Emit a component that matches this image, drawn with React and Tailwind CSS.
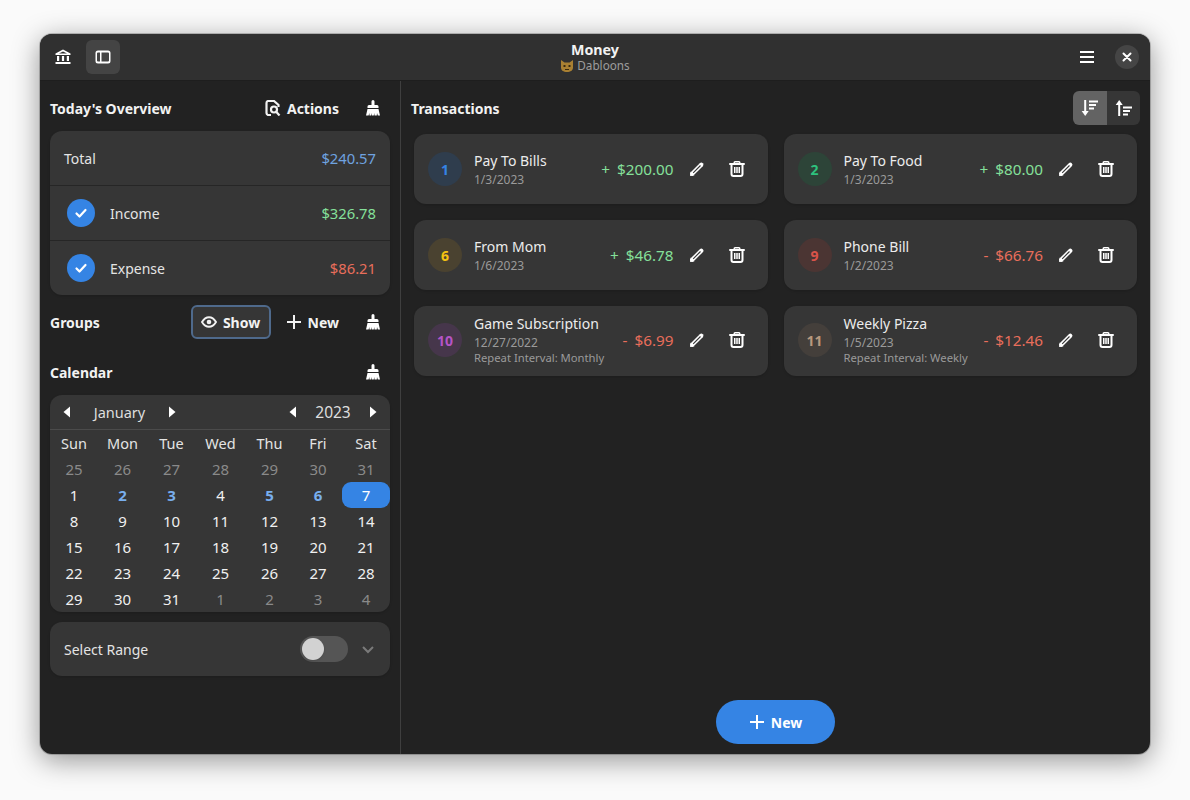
import React from 'react'

const Bank = () => (
  <svg width="16" height="16" viewBox="0 0 16 16" fill="currentColor">
    <path fillRule="evenodd" d="M8 0.500 15.500 4.500V6H.5V4.500ZM8 2.600 4 4.500h8Z" />
    <rect x="2" y="7" width="2.200" height="5" />
    <rect x="6.900" y="7" width="2.200" height="5" />
    <rect x="11.800" y="7" width="2.200" height="5" />
    <rect x="0.500" y="13" width="15" height="2" />
  </svg>
)

const SidebarIcon = () => (
  <svg width="16" height="16" viewBox="0 0 16 16" fill="currentColor">
    <path fillRule="evenodd" d="M3 1.500h10a2.500 2.500 0 0 1 2.500 2.500v8a2.500 2.500 0 0 1-2.500 2.500H3A2.500 2.500 0 0 1 .5 12V4A2.500 2.500 0 0 1 3 1.500Zm3.500 2v9H13a1 1 0 0 0 1-1V4.500a1 1 0 0 0-1-1ZM3 3.500a1 1 0 0 0-1 1v7a1 1 0 0 0 1 1h2v-9Z" />
  </svg>
)

const Menu = () => (
  <svg width="16" height="16" viewBox="0 0 16 16" fill="currentColor">
    <rect x="1" y="2" width="14" height="2" />
    <rect x="1" y="7" width="14" height="2" />
    <rect x="1" y="12" width="14" height="2" />
  </svg>
)

const Close = () => (
  <svg width="10" height="10" viewBox="0 0 10 10" stroke="currentColor" strokeWidth="2" strokeLinecap="round">
    <path d="M1.500 1.500 8.500 8.500M8.500 1.500 1.500 8.500" />
  </svg>
)

const Actions = () => (
  <svg width="16" height="16" viewBox="0 0 16 16" fill="none" stroke="currentColor" strokeWidth="2.200">
    <path d="M6 15H3A2 2 0 0 1 1.500 13V3A2 2 0 0 1 3 1h6l4.500 4v2" />
    <circle cx="9" cy="9.500" r="3" />
    <path d="M10.500 11 14.500 15.500" />
  </svg>
)

const Broom = () => (
  <svg width="16" height="16" viewBox="0 0 16 16" fill="currentColor">
    <path d="M6.500 1.500a1.500 1.500 0 0 1 3 0V5h2.500a1.500 1.500 0 0 1 1.500 1.500V8h-11V6.500A1.500 1.500 0 0 1 4 5h2.500Z" />
    <path d="M2.500 9h11l1.500 6.500h-2.200l-.8-2.500-.2 2.500H9.500l-.3-2.500-.4 2.500H7l-.2-2.500-.5 2.500H4.500l-.2-2.500-.7 2.500H1Z" />
  </svg>
)

const Eye = () => (
  <svg width="16" height="16" viewBox="0 0 16 16" fill="currentColor">
    <path d="M1 8C2.800 5 5 3.200 8 3.200S13.200 5 15 8c-1.800 3-4 4.800-7 4.800S2.800 11 1 8Z" fill="none" stroke="currentColor" strokeWidth="1.900" />
    <circle cx="8" cy="8" r="2.300" />
  </svg>
)

const Plus = () => (
  <svg width="16" height="16" viewBox="0 0 16 16" fill="currentColor">
    <rect x="7" y="1" width="2" height="14" />
    <rect x="1" y="7" width="14" height="2" />
  </svg>
)

const Pencil = () => (
  <svg width="16" height="16" viewBox="0 0 16 16" fill="none">
    <path d="M3.200 12.800 12.300 3.700" stroke="white" strokeWidth="4.200" strokeLinecap="round" />
    <path d="M1 15 1.800 10.500 5.500 14.200Z" fill="white" />
    <path d="M4.200 11.800 11.500 4.500" stroke="#363636" strokeWidth="1.100" />
  </svg>
)

const Trash = () => (
  <svg width="16" height="16" viewBox="0 0 16 16" fill="currentColor">
    <path fillRule="evenodd" d="M6 0h4a1.500 1.500 0 0 1 1.500 1.500V2H15a.9.9 0 0 1 0 2h-.500v9a3 3 0 0 1-3 3h-7a3 3 0 0 1-3-3V4H1a.9.9 0 0 1 0-2h3.500v-.5A1.500 1.500 0 0 1 6 0Zm0 1.500V2h4v-.5ZM3.500 4v9a1 1 0 0 0 1 1h7a1 1 0 0 0 1-1V4Z" />
    <rect x="5" y="6" width="1.500" height="6" />
    <rect x="7.250" y="6" width="1.500" height="6" />
    <rect x="9.500" y="6" width="1.500" height="6" />
  </svg>
)

const SortDown = () => (
  <svg width="18" height="18" viewBox="0 0 18 18" fill="currentColor">
    <rect x="3.200" y="1" width="2" height="12" />
    <path d="M0.700 12h7L4.200 17Z" />
    <rect x="8" y="1.500" width="9" height="2" />
    <rect x="8" y="5" width="7" height="2" />
    <rect x="8" y="8.500" width="5" height="2" />
  </svg>
)

const SortUp = () => (
  <svg width="18" height="18" viewBox="0 0 18 18" fill="currentColor">
    <rect x="3.200" y="5" width="2" height="12" />
    <path d="M0.700 6h7L4.200 1Z" />
    <rect x="8" y="7.500" width="9" height="2" />
    <rect x="8" y="11" width="7" height="2" />
    <rect x="8" y="14.500" width="5" height="2" />
  </svg>
)

const Check = () => (
  <svg width="14" height="14" viewBox="0 0 14 14" fill="none" stroke="white" strokeWidth="2.200" strokeLinecap="round" strokeLinejoin="round">
    <path d="M2.500 7.500 5.500 10.500 11.500 4" />
  </svg>
)

const Cat = () => (
  <svg width="14" height="14" viewBox="0 0 14 14">
    <path d="M1 1l3.500 2.500h5L13 1v7.500C13 11.500 10.500 13 7 13s-6-1.500-6-4.500Z" fill="#a98032" />
    <rect x="3.500" y="6" width="2" height="2" fill="#3a2a10" />
    <rect x="8.500" y="6" width="2" height="2" fill="#3a2a10" />
    <path d="M5 10h4v1H5Z" fill="#3a2a10" />
  </svg>
)

const TriLeft = () => (
  <svg width="8" height="12" viewBox="0 0 8 12" fill="currentColor"><path d="M7 0.500V11.500L0.500 6Z" /></svg>
)

const TriRight = () => (
  <svg width="8" height="12" viewBox="0 0 8 12" fill="currentColor"><path d="M1 0.500V11.500L7.500 6Z" /></svg>
)

const transactions = [
  { id: 1, title: 'Pay To Bills', date: '1/3/2023', amount: '$200.00', sign: '+', badge: 'bg-[#2f3d4d]', num: 'text-[#3584e4]' },
  { id: 2, title: 'Pay To Food', date: '1/3/2023', amount: '$80.00', sign: '+', badge: 'bg-[#2d4438]', num: 'text-[#2ec27e]' },
  { id: 6, title: 'From Mom', date: '1/6/2023', amount: '$46.78', sign: '+', badge: 'bg-[#4a4230]', num: 'text-[#f5c211]' },
  { id: 9, title: 'Phone Bill', date: '1/2/2023', amount: '$66.76', sign: '-', badge: 'bg-[#4b3533]', num: 'text-[#d9534a]' },
  { id: 10, title: 'Game Subscription', date: '12/27/2022', repeat: 'Repeat Interval: Monthly', amount: '$6.99', sign: '-', badge: 'bg-[#46364b]', num: 'text-[#b554c7]' },
  { id: 11, title: 'Weekly Pizza', date: '1/5/2023', repeat: 'Repeat Interval: Weekly', amount: '$12.46', sign: '-', badge: 'bg-[#443f3b]', num: 'text-[#b8997e]' },
]

const weekDays = ['Sun', 'Mon', 'Tue', 'Wed', 'Thu', 'Fri', 'Sat']
const days = [
  [25, 'o'], [26, 'o'], [27, 'o'], [28, 'o'], [29, 'o'], [30, 'o'], [31, 'o'],
  [1], [2, 'm'], [3, 'm'], [4], [5, 'm'], [6, 'm'], [7, 's'],
  [8], [9], [10], [11], [12], [13], [14],
  [15], [16], [17], [18], [19], [20], [21],
  [22], [23], [24], [25], [26], [27], [28],
  [29], [30], [31], [1, 'o'], [2, 'o'], [3, 'o'], [4, 'o'],
]

const dayClass = {
  o: 'text-[#8a8a8a]',
  m: 'font-bold text-[#78aeed]',
  s: 'bg-[#3584e4] rounded-[9px] text-white',
}

const SectionHead = ({ title, children }) => (
  <div className='h-[34px] flex items-center justify-between'>
    <h3 className='text-[14px] font-bold text-[#f2f2f2] pt-[1px]'>{title}</h3>
    <div className='flex items-center'>{children}</div>
  </div>
)

const BroomBtn = () => (
  <button className='w-[34px] h-[34px] ml-[1px] flex items-center justify-center text-white'><Broom /></button>
)

const TransactionCard = ({ t }) => (
  <div className={`h-[70px] rounded-xl bg-[#363636] shadow-sm px-[14px] flex items-center ${t.repeat ? 'pb-[2px]' : ''}`}>
    <div className={`w-[34px] h-[34px] rounded-full flex items-center justify-center text-[14px] font-bold ${t.badge} ${t.num}`}>{t.id}</div>
    <div className='ml-3 flex-1 flex flex-col min-w-0'>
      <span className='text-[14px] leading-[18px] text-[#ececec]'>{t.title}</span>
      <span className='text-[12px] leading-[15px] mt-[2px] text-[#9a9a9a]'>{t.date}</span>
      {t.repeat && <span className='text-[11.25px] leading-[15px] text-[#9a9a9a]'>{t.repeat}</span>}
    </div>
    <div className={`text-[15.25px] flex gap-[7px] ${t.sign === '+' ? 'text-[#85e09a]' : 'text-[#e96e5b]'}`}>
      <span>{t.sign}</span><span>{t.amount}</span>
    </div>
    <button className='ml-[6px] w-[34px] h-[34px] flex items-center justify-center text-white'><Pencil /></button>
    <button className='ml-[6px] w-[34px] h-[34px] flex items-center justify-center text-white'><Trash /></button>
  </div>
)

const App = () => {
  return (
    <div className='w-[1190px] h-[800px] bg-[#fafafa] pt-[34px] pl-[40px] overflow-hidden' style={{ fontFamily: '"Noto Sans", sans-serif' }}>
      <div className='w-[1110px] h-[720px] rounded-xl bg-[#222222] overflow-hidden flex flex-col text-white shadow-[0_0_0_1px_rgba(0,0,0,0.2),0_6px_28px_rgba(0,0,0,0.42)]'>
        <header className='h-[46px] shrink-0 bg-[#303030] flex items-center px-[6px] border-b border-[#1e1e1e] box-content'>
          <div className='flex gap-[6px]'>
            <button className='w-[34px] h-[34px] flex items-center justify-center'><Bank /></button>
            <button className='w-[34px] h-[34px] rounded-md bg-[#444444] flex items-center justify-center'><SidebarIcon /></button>
          </div>
          <div className='flex-1 flex flex-col items-center'>
            <span className='text-[14.25px] leading-[17px] font-bold text-[#f2f2f2]'>Money</span>
            <span className='text-[11.75px] leading-[15px] text-[#9d9d9d] flex items-center gap-[3px]'><Cat />Dabloons</span>
          </div>
          <div className='flex items-center'>
            <button className='w-[34px] h-[34px] flex items-center justify-center'><Menu /></button>
            <div className='w-[34px] h-[34px] ml-[6px] flex items-center justify-center'>
              <div className='w-6 h-6 rounded-full bg-[#454545] flex items-center justify-center'><Close /></div>
            </div>
          </div>
        </header>

        <div className='flex-1 flex min-h-0'>
          <aside className='w-[361px] shrink-0 border-r border-[#3f3f3f] px-[10px] pt-[10px]'>
            <SectionHead title="Today's Overview">
              <button className='flex items-center gap-[6px] text-[14px] font-bold text-[#f2f2f2] h-[34px]'><Actions /><span className='pt-[1px]'>Actions</span></button>
              <div className='w-[16px]' />
              <BroomBtn />
            </SectionHead>

            <div className='mt-[6px] rounded-xl bg-[#363636] shadow-sm text-[14px] text-[#e4e4e4]'>
              <div className='h-[54px] pt-[1px] flex items-center justify-between px-[14px]'>
                <span>Total</span><span className='text-[14.75px] text-[#6fa3e0]'>$240.57</span>
              </div>
              <div className='h-[55px] border-t border-[#262626] flex items-center pl-[17px] pr-[14px]'>
                <span className='w-7 h-7 rounded-full bg-[#3584e4] flex items-center justify-center'><Check /></span>
                <span className='ml-[15px] flex-1 pt-[1px]'>Income</span><span className='text-[14.75px] pt-[1px] text-[#85e09a]'>$326.78</span>
              </div>
              <div className='h-[55px] border-t border-[#262626] flex items-center pl-[17px] pr-[14px]'>
                <span className='w-7 h-7 rounded-full bg-[#3584e4] flex items-center justify-center'><Check /></span>
                <span className='ml-[15px] flex-1 pt-[1px]'>Expense</span><span className='text-[14.75px] pt-[1px] text-[#e96e5b]'>$86.21</span>
              </div>
            </div>

            <div className='mt-[10px]'>
              <SectionHead title='Groups'>
                <button className='w-[80px] h-[34px] rounded-md bg-[#363636] border-2 border-[#4f6a8c] flex items-center justify-center gap-[6px] text-[14px] font-bold text-[#f2f2f2]'><Eye /><span className='pt-[1px]'>Show</span></button>
                <button className='ml-[15px] flex items-center gap-[6px] text-[14px] font-bold text-[#f2f2f2]'><Plus /><span className='pt-[1px]'>New</span></button>
                <div className='w-[16px]' />
                <BroomBtn />
              </SectionHead>
            </div>

            <div className='mt-4'>
              <SectionHead title='Calendar'><BroomBtn /></SectionHead>
            </div>

            <div className='mt-[6px] rounded-xl bg-[#363636] shadow-sm overflow-hidden text-[15px]'>
              <div className='h-[35px] border-b border-[#4b4b4b] flex items-center justify-between px-[13px] text-[#dedede]'>
                <div className='flex items-center'>
                  <span className='text-white'><TriLeft /></span>
                  <span className='w-[97px] text-center text-[14.5px] pt-[1px]'>January</span>
                  <span className='text-white'><TriRight /></span>
                </div>
                <div className='flex items-center'>
                  <span className='text-white'><TriLeft /></span>
                  <span className='w-[72px] text-center text-[15.5px] pt-[1px]'>2023</span>
                  <span className='text-white'><TriRight /></span>
                </div>
              </div>
              <div className='grid grid-cols-[48px_49px_49px_49px_49px_48px_48px]'>
                {weekDays.map((d) => (
                  <div key={d} className='h-[26px] pt-[1px] text-[14.5px] flex items-center justify-center text-[#e4e4e4]'>{d}</div>
                ))}
                {days.map(([n, kind], i) => (
                  <div key={i} className={`h-[26px] pt-[1px] flex items-center justify-center ${dayClass[kind] || 'text-[#f0f0f0]'}`}>{n}</div>
                ))}
              </div>
            </div>

            <div className='mt-[10px] h-[54px] rounded-xl bg-[#363636] shadow-sm flex items-center px-[14px] pr-[15px] text-[14px] text-[#e4e4e4]'>
              <span className='flex-1 pt-[1px]'>Select Range</span>
              <div className='w-[48px] h-[26px] rounded-full bg-[#555555] p-[2px]'>
                <div className='w-[22px] h-[22px] rounded-full bg-[#d2d2d2] shadow' />
              </div>
              <svg className='ml-[13px]' width="14" height="14" viewBox="0 0 14 14" fill="none" stroke="#7a7a7a" strokeWidth="2">
                <path d="M2 5 7 10 12 5" />
              </svg>
            </div>
          </aside>

          <main className='flex-1 flex flex-col py-[10px] min-w-0'>
            <div className='h-[34px] flex items-center justify-between px-[10px]'>
              <h3 className='text-[14px] font-bold text-[#f2f2f2] pt-[1px]'>Transactions</h3>
              <div className='flex rounded-md overflow-hidden'>
                <button className='w-[34px] h-[34px] bg-[#636363] flex items-center justify-center'><SortDown /></button>
                <button className='w-[33px] h-[34px] bg-[#363636] flex items-center justify-center'><SortUp /></button>
              </div>
            </div>
            <div className='mt-[9px] mx-[13px] grid grid-cols-2 gap-x-4 gap-y-4'>
              {transactions.map((t) => <TransactionCard key={t.id} t={t} />)}
            </div>
            <div className='flex-1' />
            <div className='flex justify-center'>
              <button className='w-[119px] h-[44px] rounded-full bg-[#3584e4] flex items-center justify-center gap-[6px] text-[14px] font-bold text-white'><Plus /><span className='pt-[1px]'>New</span></button>
            </div>
          </main>
        </div>
      </div>
    </div>
  )
}

export default App
